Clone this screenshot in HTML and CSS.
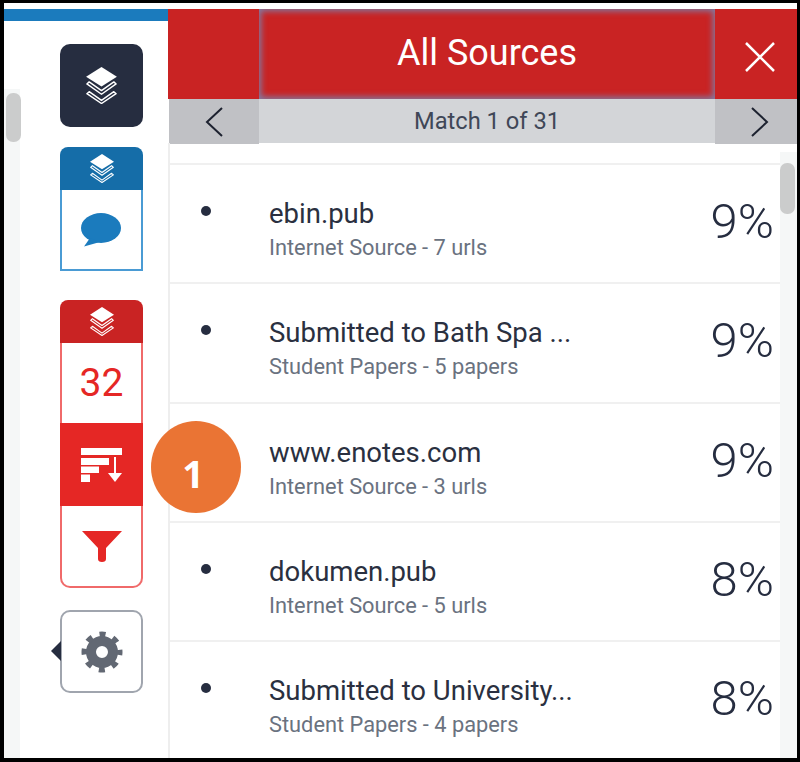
FILE: index.html
```html
<!DOCTYPE html>
<html lang="en">
<head>
    <meta charset="UTF-8">
    <meta name="viewport" content="width=device-width, initial-scale=1.0">
    <title>All Sources</title>
    <link rel="stylesheet" href="styles.css">
</head>
<body>
    <svg class="defs" width="0" height="0" aria-hidden="true">
        <symbol id="layers" viewBox="0 0 30 36">
            <path d="M15 0 30 9.500 15 19 0 9.500Z" fill="currentColor"/>
            <path d="M3 14.500 0.800 16.500 15 26.500 29.200 16.500 27 14.500 15 23Z" fill="none" stroke="currentColor" stroke-width="1.400" stroke-linejoin="round"/>
            <path d="M3 24 0.800 26 15 35.500 29.200 26 27 24 15 32.500Z" fill="none" stroke="currentColor" stroke-width="1.400" stroke-linejoin="round"/>
        </symbol>
    </svg>

    <div class="frame">
        <aside class="sidebar">
            <div class="sidebar-bar"></div>
            <div class="scroll-thumb scroll-thumb-left"></div>

            <div class="tools">
                <button class="tool tool-dark">
                    <svg class="layers-lg"><use href="#layers"/></svg>
                </button>

                <div class="group group-blue">
                    <div class="group-head"><svg class="layers-sm"><use href="#layers"/></svg></div>
                    <div class="group-cell">
                        <svg class="bubble" width="40" height="34" viewBox="0 0 40 34">
                            <ellipse cx="20" cy="15" rx="20" ry="15" fill="#1b7bbd"/>
                            <path d="M9 25 3 33.500 19 29Z" fill="#1b7bbd"/>
                        </svg>
                    </div>
                </div>

                <div class="group group-red">
                    <div class="group-head"><svg class="layers-sm"><use href="#layers"/></svg></div>
                    <div class="group-cell count">32</div>
                    <div class="group-cell sort">
                        <svg width="41" height="36" viewBox="0 0 41 36">
                            <path d="M0 1H41V8H0ZM0 11H28V18H0ZM0 19.500H18V26H0ZM0 27.500H9V35H0Z" fill="#fff"/>
                            <path d="M34 10V28" stroke="#fff" stroke-width="2"/>
                            <path d="M27 26H41L34 35Z" fill="#fff"/>
                        </svg>
                    </div>
                    <div class="group-cell filter">
                        <svg width="40" height="31" viewBox="0 0 40 31">
                            <path d="M0 0H40L24 17V28Q24 31 20 31T16 28V17Z" fill="#e52725"/>
                        </svg>
                    </div>
                </div>

                <button class="tool tool-settings">
                    <svg width="42" height="42" viewBox="0 0 42 42">
                        <circle cx="21" cy="21" r="11" fill="none" stroke="#626873" stroke-width="10"/>
                        <circle cx="21" cy="21" r="17.500" fill="none" stroke="#626873" stroke-width="6" stroke-dasharray="6 7.744" stroke-dashoffset="3"/>
                    </svg>
                </button>
            </div>

            <div class="step-badge">1</div>
        </aside>

        <main class="panel">
            <header class="panel-head">
                <div class="head-side"></div>
                <h1 class="head-title">All Sources</h1>
                <button class="head-side head-close">
                    <svg width="30" height="30" viewBox="0 0 30 30">
                        <path d="M1 1 29 29M29 1 1 29" stroke="#fff" stroke-width="2.500" fill="none"/>
                    </svg>
                </button>
            </header>

            <nav class="match-nav">
                <button class="nav-btn">
                    <svg width="20" height="30" viewBox="0 0 20 30"><path d="M18 1 3 15 18 29" fill="none" stroke="#1d2230" stroke-width="2"/></svg>
                </button>
                <div class="match-label">Match 1 of 31</div>
                <button class="nav-btn nav-next">
                    <svg width="20" height="30" viewBox="0 0 20 30"><path d="M2 1 17 15 2 29" fill="none" stroke="#1d2230" stroke-width="2"/></svg>
                </button>
            </nav>

            <ul class="sources">
                <li class="source">
                    <span class="dot"></span>
                    <div class="source-info">
                        <div class="source-name">ebin.pub</div>
                        <div class="source-sub">Internet Source - 7 urls</div>
                    </div>
                    <div class="source-pct">9%</div>
                </li>
                <li class="source">
                    <span class="dot"></span>
                    <div class="source-info">
                        <div class="source-name">Submitted to Bath Spa ...</div>
                        <div class="source-sub">Student Papers - 5 papers</div>
                    </div>
                    <div class="source-pct">9%</div>
                </li>
                <li class="source">
                    <span class="dot"></span>
                    <div class="source-info">
                        <div class="source-name">www.enotes.com</div>
                        <div class="source-sub">Internet Source - 3 urls</div>
                    </div>
                    <div class="source-pct">9%</div>
                </li>
                <li class="source">
                    <span class="dot"></span>
                    <div class="source-info">
                        <div class="source-name">dokumen.pub</div>
                        <div class="source-sub">Internet Source - 5 urls</div>
                    </div>
                    <div class="source-pct">8%</div>
                </li>
                <li class="source">
                    <span class="dot"></span>
                    <div class="source-info">
                        <div class="source-name">Submitted to University...</div>
                        <div class="source-sub">Student Papers - 4 papers</div>
                    </div>
                    <div class="source-pct">8%</div>
                </li>
            </ul>
            <div class="scroll-track"><div class="scroll-thumb scroll-thumb-right"></div></div>
        </main>
    </div>
</body>
</html>
```

FILE: styles.css
```css
* {
    box-sizing: border-box;
}
html, body {
    margin: 0;
    padding: 0;
}
body {
    font-family: Roboto, "Liberation Sans", sans-serif;
    background-color: #fff;
    overflow: hidden;
}
button {
    padding: 0;
    border: none;
    background: none;
    font: inherit;
}
.defs {
    position: absolute;
}
.frame {
    display: grid;
    grid-template-columns: 164px 1fr;
    height: 762px;
    border: solid #000;
    border-width: 3px 3px 4px 4px;
    padding-top: 6px;
    overflow: hidden;
}

/* left column */
.sidebar {
    position: relative;
    z-index: 1;
}
.sidebar::before {
    content: "";
    position: absolute;
    left: 0;
    top: 80px;
    bottom: 0;
    width: 16px;
    background-color: #f5f7f7;
}
.sidebar-bar {
    height: 12px;
    background-color: #1b7bbd;
}
.tools {
    display: flex;
    flex-direction: column;
    align-items: flex-start;
    padding: 23px 0 0 56px;
}
.tool, .group {
    position: relative;
    display: flex;
    width: 83px;
}
.tool {
    align-items: center;
    justify-content: center;
    height: 83px;
    border-radius: 10px;
}
.tool-dark {
    background-color: #262d40;
    color: #fff;
}
.layers-lg {
    width: 31px;
    height: 37px;
}
.layers-sm {
    width: 24px;
    height: 29px;
}
.group {
    flex-direction: column;
    border-radius: 8px 8px 0 0;
}
.group-blue {
    margin-top: 20px;
    height: 124px;
}
.group-red {
    margin-top: 29px;
    height: 288px;
    border-radius: 8px 8px 10px 10px;
}
.group-head {
    display: flex;
    align-items: center;
    justify-content: center;
    height: 43px;
    border-radius: 8px 8px 0 0;
    color: #fff;
}
.group-blue .group-head {
    background-color: #156da8;
}
.group-blue .group-cell {
    flex: 1;
    border: solid #4a9bd4;
    border-width: 0 2px 2px;
    padding-right: 2px;
}
.group-red .group-head {
    background-color: #c92323;
}
.group-cell {
    display: flex;
    align-items: center;
    justify-content: center;
}
.count {
    height: 80px;
    border: solid #f06a6a;
    border-width: 0 2px;
    color: #e52725;
    font-size: 39px;
}
.sort {
    height: 83px;
    background-color: #e52725;
}
.filter {
    height: 82px;
    border: solid #f06a6a;
    border-width: 0 2px 2px;
    border-radius: 0 0 10px 10px;
}
.tool-settings {
    margin-top: 22px;
    background-color: #fff;
    border: 2px solid #a0a5ae;
}
.tool-settings::before {
    content: "";
    position: absolute;
    left: -11px;
    top: 29px;
    border: solid transparent;
    border-width: 10px 10px 10px 0;
    border-right-color: #262d40;
}
.step-badge {
    position: absolute;
    left: 147px;
    top: 412px;
    width: 90px;
    height: 92px;
    padding-right: 6px;
    border-radius: 50%;
    background-color: #ea7434;
    color: #fff;
    font-family: "Open Sans", sans-serif;
    font-weight: 700;
    font-size: 38px;
    line-height: 104px;
    text-align: center;
}
.scroll-thumb {
    position: absolute;
    border-radius: 7px;
    background-color: #cbcccc;
}
.scroll-thumb-left {
    left: 2px;
    top: 84px;
    width: 15px;
    height: 49px;
    z-index: 1;
}

/* header + match nav */
.panel {
    position: relative;
    display: flex;
    flex-direction: column;
    min-width: 0;
}
.panel-head, .match-nav {
    display: grid;
    grid-template-columns: 91px 456px 1fr;
}
.panel-head {
    height: 90px;
    background-color: #c92323;
}
.head-title {
    margin: 0;
    box-shadow: inset 0 0 6px 2px #7d7fa8;
    color: #fff;
    font-size: 36px;
    font-weight: 400;
    line-height: 88px;
    text-align: center;
}
.head-close {
    display: flex;
    align-items: center;
    justify-content: center;
    padding: 6px 0 0 7px;
}
.match-nav {
    grid-template-columns: 90px 456px 1fr;
    height: 44px;
    margin-left: 1px;
    background-color: #d3d5d8;
}
.nav-btn {
    display: flex;
    align-items: center;
    justify-content: center;
    background-color: #c0c1c5;
}
.nav-next {
    padding-left: 8px;
}
.match-label {
    color: #3f4757;
    font-size: 23.700px;
    line-height: 45px;
    text-align: center;
}

/* source list */
.sources {
    flex: 1;
    list-style: none;
    margin: 0;
    padding: 20px 0 0;
    border-left: 2px solid #eee;
}
.source {
    display: flex;
    height: 119.300px;
    padding-right: 23px;
    border-top: 2px solid #f0f0f0;
}
.dot {
    flex: none;
    width: 10px;
    height: 10px;
    margin: 41px 0 0 31px;
    border-radius: 50%;
    background-color: #262d40;
}
.source-info {
    flex: 1;
    padding: 33px 0 0 58px;
}
.source-name {
    color: #2a3040;
    font-size: 27.500px;
    line-height: 32px;
}
.source-sub {
    margin-top: 6px;
    color: #6a7280;
    font-size: 21.800px;
    line-height: 24px;
}
.source-pct {
    padding-top: 29px;
    color: #262d40;
    font-size: 49px;
    font-weight: 350;
    line-height: 56px;
}
.scroll-track {
    position: absolute;
    right: 0;
    top: 143px;
    bottom: 0;
    width: 17px;
    background-color: #f5f7f7;
}
.scroll-thumb-right {
    left: 0;
    top: 11px;
    width: 15px;
    height: 51px;
}
```
